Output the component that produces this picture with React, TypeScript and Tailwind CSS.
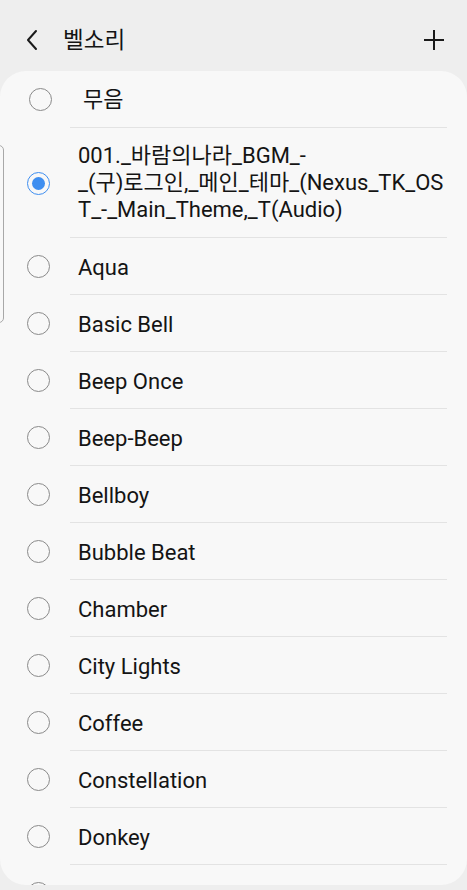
import React from "react";

const items = [
  "Aqua",
  "Basic Bell",
  "Beep Once",
  "Beep-Beep",
  "Bellboy",
  "Bubble Beat",
  "Chamber",
  "City Lights",
  "Coffee",
  "Constellation",
  "Donkey",
];

function Radio({ checked }: { checked?: boolean }) {
  if (checked) {
    return (
      <div className="w-[23px] h-[23px] rounded-full border border-[#3e8ef0] flex items-center justify-center">
        <div className="w-[13px] h-[13px] rounded-full bg-[#3e8ef0]" />
      </div>
    );
  }
  return <div className="w-[23px] h-[23px] rounded-full border border-[#8a8a8a]" />;
}

export default function App() {
  const font = { fontFamily: 'Roboto, "Noto Sans CJK KR", sans-serif' };
  return (
    <div
      className="w-[467px] h-[890px] bg-[#eeeeee] overflow-hidden flex flex-col text-[#141414]"
      style={font}
    >
      <div className="h-[71px] shrink-0 flex items-center pl-[22px] pr-[22px] pt-[8px]">
        <svg width="18" height="22" viewBox="0 0 18 22" className="ml-[2px]">
          <path d="M12 2 L4 11 L12 20" fill="none" stroke="#1a1a1a" strokeWidth="2" strokeLinecap="round" strokeLinejoin="round" />
        </svg>
        <div className="ml-[21px] text-[22.5px] leading-[28px]">벨소리</div>
        <div className="flex-1" />
        <svg width="22" height="22" viewBox="0 0 22 22">
          <path d="M11 1 V21 M1 11 H21" fill="none" stroke="#1a1a1a" strokeWidth="2" />
        </svg>
      </div>
      <div className="relative h-[814px] shrink-0 bg-[#f8f8f8] rounded-[26px] overflow-hidden flex flex-col text-[22px]">
        <div className="absolute left-[-6px] top-[74px] w-[10px] h-[178px] rounded-[5px] border border-[#a8a8a8]" />
        <div className="flex items-stretch shrink-0">
          <div className="w-[70px] flex items-center pl-[29px]">
            <Radio />
          </div>
          <div className="flex-1 mr-[20px] h-[57px] border-b border-[#e3e3e3] flex items-center pl-[13px]">
            무음
          </div>
        </div>
        <div className="flex items-stretch shrink-0">
          <div className="w-[70px] flex items-center pl-[27px]">
            <Radio checked />
          </div>
          <div className="flex-1 mr-[20px] py-[14px] border-b border-[#e3e3e3] pl-[8px] leading-[27px] whitespace-nowrap">
            <div>001._바람의나라_BGM_-</div>
            <div>_(구)로그인,_메인_테마_(Nexus_TK_OS</div>
            <div>T_-_Main_Theme,_T(Audio)</div>
          </div>
        </div>
        {items.map((name) => (
          <div key={name} className="flex items-stretch shrink-0">
            <div className="w-[70px] flex items-center pl-[27px]">
              <Radio />
            </div>
            <div className="flex-1 mr-[20px] h-[57px] border-b border-[#e3e3e3] flex items-center pl-[8px] pt-[2px]">
              {name}
            </div>
          </div>
        ))}
        <div className="flex items-stretch shrink-0">
          <div className="w-[70px] flex items-center pl-[27px]">
            <Radio />
          </div>
          <div className="flex-1 mr-[20px] h-[57px]" />
        </div>
      </div>
    </div>
  );
}
